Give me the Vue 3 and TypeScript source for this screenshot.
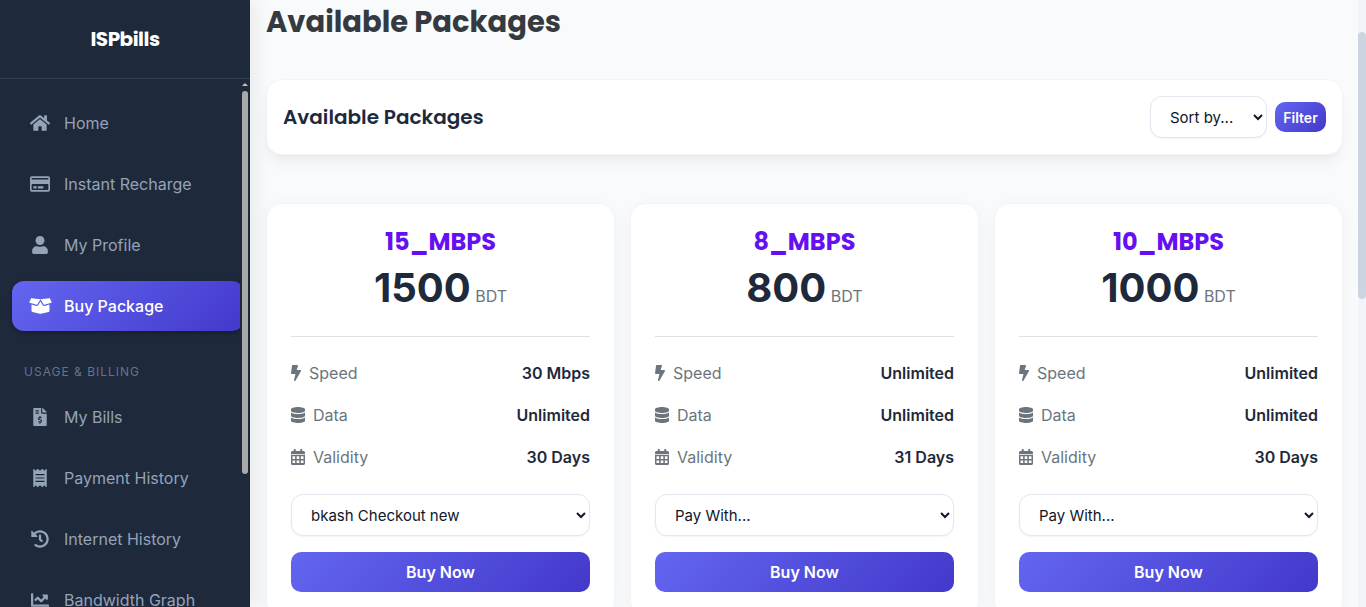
<script setup lang="ts">
import { ref } from 'vue'

interface Icon { box: string; width: number; path: string }
interface NavItem { label: string; icon: Icon; active?: boolean }
interface Pack { name: string; price: number; speed: string; data: string; validity: string; gateway: string }

// Glyphs share a 512-unit height; width is the rendered width in pixels.
const home: Icon = { box: '0 0 576 512', width: 20, path: 'M280.37 148.26L96 300.11V464a16 16 0 0 0 16 16l112.06-.29a16 16 0 0 0 15.92-16V368a16 16 0 0 1 16-16h64a16 16 0 0 1 16 16v95.64a16 16 0 0 0 16 16.05L464 480a16 16 0 0 0 16-16V300L295.67 148.26a12.19 12.19 0 0 0-15.3 0zM571.6 251.47L488 182.56V44.05a12 12 0 0 0-12-12h-56a12 12 0 0 0-12 12v72.61L318.47 43a48 48 0 0 0-61 0L4.34 251.47a12 12 0 0 0-1.6 16.9l25.5 31A12 12 0 0 0 45.15 301l235.22-193.74a12.19 12.19 0 0 1 15.3 0L530.9 301a12 12 0 0 0 16.9-1.6l25.5-31a12 12 0 0 0-1.7-16.93z' }
const card: Icon = { box: '0 0 576 512', width: 20, path: 'M527.9 32H48.1C21.5 32 0 53.5 0 80v352c0 26.5 21.5 48 48.1 48h479.8c26.6 0 48.1-21.5 48.1-48V80c0-26.5-21.5-48-48.1-48zM54.1 80h467.8c3.3 0 6 2.7 6 6v42H48.1V86c0-3.3 2.7-6 6-6zm467.8 352H54.1c-3.3 0-6-2.7-6-6V256h479.8v170c0 3.3-2.7 6-6 6zM192 332v40c0 6.6-5.4 12-12 12h-72c-6.6 0-12-5.4-12-12v-40c0-6.6 5.4-12 12-12h72c6.6 0 12 5.4 12 12zm192 0v40c0 6.6-5.4 12-12 12H236c-6.6 0-12-5.4-12-12v-40c0-6.6 5.4-12 12-12h136c6.6 0 12 5.4 12 12z' }
const user: Icon = { box: '0 0 448 512', width: 16, path: 'M224 256c70.7 0 128-57.3 128-128S294.7 0 224 0 96 57.3 96 128s57.3 128 128 128zm89.6 32h-16.7c-22.2 10.2-46.9 16-72.9 16s-50.6-5.8-72.9-16h-16.7C60.2 288 0 348.2 0 422.4V464c0 26.5 21.5 48 48 48h352c26.5 0 48-21.5 48-48v-41.6c0-74.2-60.2-134.4-134.4-134.4z' }
const box: Icon = { box: '0 0 640 512', width: 23, path: 'M425.7 256c-16.9 0-32.8-9-41.4-23.4L320 126l-64.2 106.6c-8.7 14.5-24.6 23.5-41.5 23.5-4.5 0-9-.6-13.3-1.9L64 215v178c0 14.7 10 27.5 24.2 31l216.2 54.1c10.2 2.5 20.9 2.5 31 0L551.8 424c14.2-3.6 24.2-16.4 24.2-31V215l-137 39.1c-4.3 1.3-8.8 1.9-13.3 1.9zm212.6-112.2L586.8 41c-3.1-6.2-9.8-9.8-16.7-8.9L320 64l91.7 152.1c3.8 6.3 11.4 9.3 18.5 7.3l197.9-56.5c9.9-2.9 14.7-13.9 10.2-23.1zM53.2 41L1.7 143.8c-4.6 9.2.3 20.2 10.1 23l197.9 56.5c7.1 2 14.7-1 18.5-7.3L320 64 69.8 32.1c-6.9-.8-13.5 2.7-16.6 8.9z' }
const bill: Icon = { box: '0 0 384 512', width: 14, path: 'M377 105L279.1 7c-4.5-4.5-10.6-7-17-7H256v128h128v-6.1c0-6.3-2.5-12.4-7-16.9zm-153 31V0H24C10.7 0 0 10.7 0 24v464c0 13.3 10.7 24 24 24h336c13.3 0 24-10.7 24-24V160H248c-13.2 0-24-10.8-24-24zM64 72c0-4.42 3.58-8 8-8h80c4.42 0 8 3.58 8 8v16c0 4.42-3.58 8-8 8H72c-4.42 0-8-3.58-8-8V72zm0 80v-16c0-4.42 3.58-8 8-8h80c4.42 0 8 3.58 8 8v16c0 4.42-3.58 8-8 8H72c-4.42 0-8-3.58-8-8zm144 263.88V440c0 4.42-3.58 8-8 8h-16c-4.42 0-8-3.58-8-8v-24.29c-11.29-.58-22.27-4.52-31.37-11.35-3.9-2.93-4.1-8.77-.57-12.14l11.75-11.21c2.77-2.64 6.89-2.76 10.13-.73 3.87 2.42 8.26 3.72 12.82 3.72h28.11c6.5 0 11.8-5.92 11.8-13.19 0-5.95-3.61-11.19-8.77-12.73l-45-13.5c-18.59-5.58-31.58-23.42-31.58-43.39 0-24.52 19.05-44.44 42.67-45.07V232c0-4.42 3.58-8 8-8h16c4.42 0 8 3.58 8 8v24.29c11.29.58 22.27 4.51 31.37 11.35 3.9 2.93 4.1 8.77.57 12.14l-11.75 11.21c-2.77 2.64-6.89 2.76-10.13.73-3.87-2.43-8.26-3.72-12.82-3.72h-28.11c-6.5 0-11.8 5.92-11.8 13.19 0 5.95 3.61 11.19 8.77 12.73l45 13.5c18.59 5.58 31.58 23.42 31.58 43.39 0 24.53-19.05 44.44-42.67 45.07z' }
const receipt: Icon = { box: '0 0 384 512', width: 14, path: 'M358.4 3.2L320 48 265.6 3.2a15.9 15.9 0 0 0-19.2 0L192 48 137.6 3.2a15.9 15.9 0 0 0-19.2 0L64 48 25.6 3.2C15-4.7 0 2.8 0 16v480c0 13.2 15 20.7 25.6 12.8L64 464l54.4 44.8a15.9 15.9 0 0 0 19.2 0L192 464l54.4 44.8a15.9 15.9 0 0 0 19.2 0L320 464l38.4 44.8c10.5 7.9 25.6.4 25.6-12.8V16c0-13.2-15-20.7-25.6-12.8zM72 336h240a8 8 0 0 1 8 8v16a8 8 0 0 1-8 8H72a8 8 0 0 1-8-8v-16a8 8 0 0 1 8-8zM72 240h240a8 8 0 0 1 8 8v16a8 8 0 0 1-8 8H72a8 8 0 0 1-8-8v-16a8 8 0 0 1 8-8zM72 144h240a8 8 0 0 1 8 8v16a8 8 0 0 1-8 8H72a8 8 0 0 1-8-8v-16a8 8 0 0 1 8-8z' }
const history: Icon = { box: '0 0 512 512', width: 18, path: 'M504 255.531c.253 136.64-111.18 248.372-247.82 248.468-59.015.042-113.223-20.53-155.822-54.911-11.077-8.94-11.905-25.541-1.839-35.607l11.267-11.267c8.609-8.609 22.353-9.551 31.891-1.984C173.062 425.135 212.781 440 256 440c101.705 0 184-82.311 184-184 0-101.705-82.311-184-184-184-48.814 0-93.149 18.969-126.068 49.932l50.754 50.754c10.08 10.08 2.941 27.314-11.313 27.314H24c-8.837 0-16-7.163-16-16V38.627c0-14.254 17.234-21.393 27.314-11.314l49.372 49.372C129.209 34.136 189.552 8 256 8c136.81 0 247.747 110.78 248 247.531zm-180.912 78.784l9.823-12.63c8.138-10.463 6.253-25.542-4.21-33.679L288 256.349V152c0-13.255-10.745-24-24-24h-16c-13.255 0-24 10.745-24 24v135.651l65.409 50.874c10.463 8.137 25.541 6.253 33.679-4.21z' }
const chart: Icon = { box: '0 0 512 512', width: 18, path: 'M496 384H64V80c0-8.84-7.16-16-16-16H16C7.16 64 0 71.16 0 80v336c0 17.67 14.33 32 32 32h464c8.84 0 16-7.16 16-16v-32c0-8.84-7.16-16-16-16zM464 96H345.94c-21.38 0-32.09 25.85-16.97 40.97l32.4 32.4L288 242.75l-73.37-73.37c-12.5-12.5-32.76-12.5-45.25 0l-68.69 68.69c-6.25 6.25-6.25 16.38 0 22.63l22.62 22.62c6.25 6.25 16.38 6.25 22.63 0L192 237.25l73.37 73.37c12.5 12.5 32.76 12.5 45.25 0l96-96 32.4 32.4c15.12 15.12 40.97 4.41 40.97-16.97V112c.01-8.84-7.15-16-15.99-16z' }
const bolt: Icon = { box: '0 0 320 512', width: 10, path: 'M296 160H180.6l42.6-129.8C227.2 15 215.7 0 200 0H56C44 0 33.8 8.9 32.2 20.8l-32 240C-1.7 275.2 9.5 288 24 288h118.7L96.6 482.5c-3.6 15.2 8 29.5 23.3 29.5 8.4 0 16.4-4.4 20.8-12l176-304c9.3-15.9-2.2-36-20.7-36z' }
const database: Icon = { box: '0 0 448 512', width: 14, path: 'M448 73.143v45.714C448 159.143 347.667 192 224 192S0 159.143 0 118.857V73.143C0 32.857 100.333 0 224 0s224 32.857 224 73.143zM448 176v102.857C448 319.143 347.667 352 224 352S0 319.143 0 278.857V176c48.125 33.143 136.208 48.572 224 48.572S399.874 209.143 448 176zm0 160v102.857C448 479.143 347.667 512 224 512S0 479.143 0 438.857V336c48.125 33.143 136.208 48.572 224 48.572S399.874 369.143 448 336z' }
const calendar: Icon = { box: '0 0 448 512', width: 14, path: 'M400 64h-40V16c0-8.8-7.2-16-16-16h-32c-8.8 0-16 7.2-16 16v48H152V16c0-8.8-7.2-16-16-16h-32c-8.8 0-16 7.2-16 16v48H48C21.5 64 0 85.5 0 112v352c0 26.5 21.5 48 48 48h352c26.5 0 48-21.5 48-48V112c0-26.5-21.5-48-48-48zM0 164h448v24H0zM48 232h84v84H48zM182 232h84v84h-84zM316 232h84v84h-84zM48 366h84v84H48zM182 366h84v84h-84zM316 366h84v84h-84z' }

const mainNav: NavItem[] = [
  { label: 'Home', icon: home },
  { label: 'Instant Recharge', icon: card },
  { label: 'My Profile', icon: user },
  { label: 'Buy Package', icon: box, active: true },
]
const billingNav: NavItem[] = [
  { label: 'My Bills', icon: bill },
  { label: 'Payment History', icon: receipt },
  { label: 'Internet History', icon: history },
  { label: 'Bandwidth Graph', icon: chart },
]

const packs = ref<Pack[]>([
  { name: '15_MBPS', price: 1500, speed: '30 Mbps', data: 'Unlimited', validity: '30 Days', gateway: 'bkash Checkout new' },
  { name: '8_MBPS', price: 800, speed: 'Unlimited', data: 'Unlimited', validity: '31 Days', gateway: 'Pay With...' },
  { name: '10_MBPS', price: 1000, speed: 'Unlimited', data: 'Unlimited', validity: '30 Days', gateway: 'Pay With...' },
])
const specs: { key: 'speed' | 'data' | 'validity'; label: string; icon: Icon }[] = [
  { key: 'speed', label: 'Speed', icon: bolt },
  { key: 'data', label: 'Data', icon: database },
  { key: 'validity', label: 'Validity', icon: calendar },
]
const gateways = ['Pay With...', 'bkash Checkout new']
const sort = ref('Sort by...')
</script>

<template>
  <div class="shell">
    <aside class="sidebar">
      <div class="brand">ISPbills</div>
      <div class="nav-scroll">
        <nav class="nav">
          <ul class="nav-list">
            <li v-for="item in mainNav" :key="item.label">
              <a href="#" class="nav-link" :class="{ active: item.active }">
                <span class="nav-icon"><svg :viewBox="item.icon.box" :width="item.icon.width" height="18" aria-hidden="true"><path :d="item.icon.path" /></svg></span>
                {{ item.label }}
              </a>
            </li>
          </ul>
          <h2 class="nav-heading">USAGE &amp; BILLING</h2>
          <ul class="nav-list">
            <li v-for="item in billingNav" :key="item.label">
              <a href="#" class="nav-link">
                <span class="nav-icon"><svg :viewBox="item.icon.box" :width="item.icon.width" height="18" aria-hidden="true"><path :d="item.icon.path" fill-rule="evenodd" /></svg></span>
                {{ item.label }}
              </a>
            </li>
          </ul>
        </nav>
        <div class="nav-bar" aria-hidden="true">
          <span class="nav-arrow"></span>
          <span class="nav-thumb"></span>
        </div>
      </div>
    </aside>

    <main class="content">
      <h1>Available Packages</h1>
      <section class="toolbar">
        <h2>Available Packages</h2>
        <form class="filters" @submit.prevent>
          <select v-model="sort" class="select sort" aria-label="Sort packages">
            <option>Sort by...</option>
            <option>Price</option>
          </select>
          <button type="submit" class="filter">Filter</button>
        </form>
      </section>

      <div class="grid">
        <article v-for="pack in packs" :key="pack.name" class="card">
          <h3>{{ pack.name }}</h3>
          <p class="price"><strong>{{ pack.price }}</strong> <span>BDT</span></p>
          <hr />
          <dl>
            <div v-for="spec in specs" :key="spec.key" class="spec">
              <dt>
                <svg :viewBox="spec.icon.box" :width="spec.icon.width" height="16" aria-hidden="true"><path :d="spec.icon.path" fill-rule="evenodd" /></svg>
                {{ spec.label }}
              </dt>
              <dd>{{ pack[spec.key] }}</dd>
            </div>
          </dl>
          <select v-model="pack.gateway" class="select" :aria-label="'Payment method for ' + pack.name">
            <option v-for="g in gateways" :key="g">{{ g }}</option>
          </select>
          <button type="button" class="buy">Buy Now</button>
        </article>
      </div>
    </main>

    <div class="page-bar" aria-hidden="true"><span class="page-thumb"></span></div>
  </div>
</template>

<style>
body {
  overflow: hidden;
}
</style>

<style scoped>
* {
  box-sizing: border-box;
}
h1, h2, h3, p, ul, dl, dd {
  margin: 0;
  padding: 0;
}
svg {
  display: block;
  fill: currentColor;
  flex: none;
}
.shell {
  display: flex;
  height: 100vh;
  overflow: hidden;
  background: #f8fafc;
  color: #1e293b;
  font-family: Inter, "Liberation Sans", sans-serif;
  font-size: 16px;
}
.sidebar {
  z-index: 1;
  display: flex;
  flex-direction: column;
  flex: none;
  width: 250px;
  background: #1e293b;
  box-shadow: 4px 0 20px rgba(0, 0, 0, 0.08);
}
.brand {
  flex: none;
  border-bottom: 1px solid #334155;
  color: #fff;
  font-family: Poppins, Inter, sans-serif;
  font-size: 20px;
  font-weight: 700;
  letter-spacing: -0.5px;
  line-height: 78px;
  text-align: center;
}
.nav-scroll {
  display: flex;
  flex: 1;
  min-height: 0;
}
.nav {
  flex: 1;
  padding: 19px 0 0 12px;
  overflow: hidden;
}
.nav-list {
  display: flex;
  flex-direction: column;
  gap: 11px;
  list-style: none;
}
.nav-link {
  display: flex;
  align-items: center;
  gap: 12px;
  height: 50px;
  margin-right: -4px;
  padding: 0 16px;
  border-radius: 12px;
  color: #94a3b8;
  font-weight: 400;
  text-decoration: none;
}
.nav-link.active {
  background: linear-gradient(135deg, #6366f1, #4338ca);
  box-shadow: 0 2px 4px rgba(0, 0, 0, 0.3);
  color: #fff;
  font-weight: 500;
}
.nav-icon {
  display: flex;
  justify-content: center;
  width: 24px;
}
.nav-heading {
  margin: 32px 0 11px;
  padding-left: 12px;
  color: #64748b;
  font-size: 12px;
  font-weight: 400;
  letter-spacing: 1px;
  line-height: 18px;
}
.nav-bar {
  display: flex;
  flex-direction: column;
  align-items: center;
  flex: none;
  width: 10px;
  padding-top: 4px;
}
.nav-arrow {
  border: 3px solid transparent;
  border-top-width: 0;
  border-bottom-color: #c0c0c0;
}
.nav-thumb {
  width: 6px;
  height: 73%;
  margin-top: 5px;
  border-radius: 3px;
  background: #a9a9a9;
}
.content {
  flex: 1;
  min-width: 0;
  padding: 0 15px 0 16px;
}
h1 {
  margin-bottom: 35px;
  color: #343a40;
  font-family: Poppins, Inter, sans-serif;
  font-size: 29px;
  font-weight: 700;
  line-height: 44px;
}
.toolbar {
  display: flex;
  align-items: center;
  justify-content: space-between;
  margin-bottom: 48px;
  padding: 16px;
  border: 1px solid #f1f5f9;
  border-radius: 16px;
  background: #fff;
  box-shadow: 0 10px 15px -3px rgba(0, 0, 0, 0.05), 0 4px 6px -2px rgba(0, 0, 0, 0.03);
}
.toolbar h2 {
  font-family: Poppins, Inter, sans-serif;
  font-size: 20px;
  font-weight: 600;
}
.filters {
  display: flex;
  align-items: center;
  gap: 8px;
}
.select {
  width: 100%;
  height: 42px;
  padding: 0 0 0 15px;
  border: 1px solid #e2e8f0;
  border-radius: 12px;
  background: #fff;
  box-shadow: 0 1px 2px rgba(0, 0, 0, 0.05);
  color: #0f172a;
  font-family: inherit;
  font-size: 15px;
}
.sort {
  width: 117px;
}
button {
  border: 0;
  background: linear-gradient(135deg, #6366f1, #4338ca);
  color: #fff;
  font-family: inherit;
}
.filter {
  min-width: 51px;
  height: 30px;
  padding: 0 8px;
  border-radius: 10px;
  font-size: 14px;
  font-weight: 600;
}
.grid {
  display: grid;
  grid-template-columns: repeat(3, minmax(0, 1fr));
  gap: 15px;
}
.card {
  padding: 24px;
  border: 1px solid #f1f5f9;
  border-radius: 16px;
  background: #fff;
  box-shadow: 0 4px 20px rgba(0, 0, 0, 0.04);
  text-align: center;
}
.card h3 {
  color: #6610f2;
  font-family: Poppins, Inter, sans-serif;
  font-size: 24px;
  font-weight: 700;
  line-height: 28px;
}
.price {
  color: #6c757d;
  line-height: 16px;
}
.price strong {
  color: #1e293b;
  font-size: 40px;
  font-weight: 700;
  line-height: 64px;
}
hr {
  height: 1px;
  margin: 16px 0 15px;
  border: 0;
  background: #dee2e6;
}
.spec {
  display: flex;
  align-items: center;
  justify-content: space-between;
  height: 42px;
}
dt {
  display: flex;
  align-items: center;
  gap: 8px;
  color: #6c757d;
}
dd {
  font-weight: 600;
}
.card .select {
  margin: 16px 0;
}
.buy {
  display: block;
  width: 100%;
  height: 40px;
  border-radius: 10px;
  font-size: 16px;
  font-weight: 600;
}
.page-bar {
  flex: none;
  width: 8px;
  padding-top: 32px;
  background: #f1f5f9;
}
.page-thumb {
  display: block;
  height: 267px;
  border-radius: 4px;
  background: #cbd5e1;
}
</style>
